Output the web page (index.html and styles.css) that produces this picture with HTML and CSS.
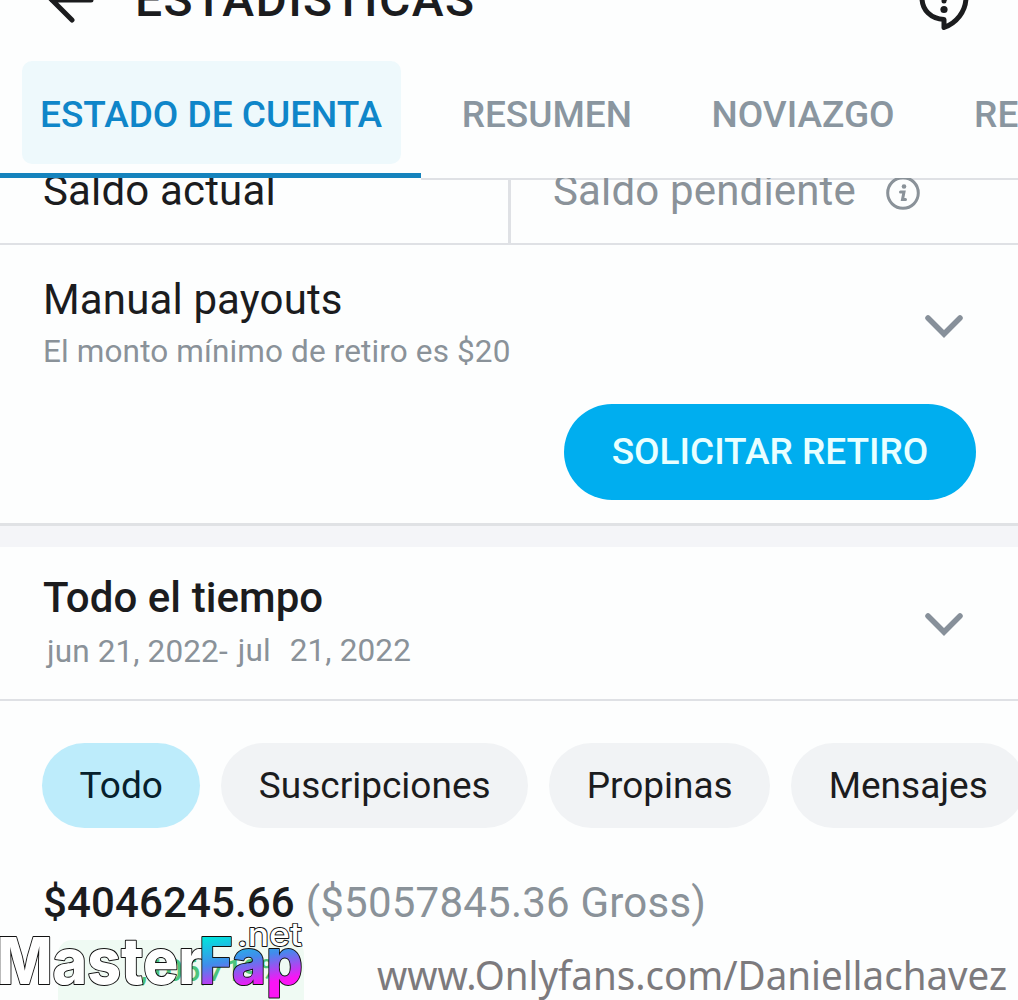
FILE: index.html
```html
<!DOCTYPE html>
<html lang="es">
<head>
<meta charset="utf-8">
<title>Estadísticas</title>
<link rel="stylesheet" href="styles.css">
</head>
<body>
<header class="topbar">
  <svg class="back" viewBox="0 0 48 48"><path d="M43 24H4M24 4L4 24l20 20"/></svg>
  <h1 class="title">ESTADÍSTICAS</h1>
  <svg class="help" viewBox="0 0 50 60"><path d="M25 49.500C12 49 3 40 3 28C3 14 12 5 25 5C38 5 47 14 47 27C47 42 37 53 25 57.500Z"/><path d="M18 21c0-9 14-9 14 0c0 6-7 6-7 10"/><circle cx="25" cy="39.500" r="3.600"/></svg>
</header>
<nav class="tabs">
  <a class="tab active">ESTADO DE CUENTA</a>
  <a class="tab">RESUMEN</a>
  <a class="tab">NOVIAZGO</a>
  <a class="tab">REFERIDOS</a>
</nav>
<section class="balances">
  <div class="balance current">Saldo actual</div>
  <div class="balance pending">Saldo pendiente
    <svg class="info" viewBox="0 0 36 36"><circle cx="18" cy="18" r="15.300"/><path d="M15.500 17h3.500l-1.500 7.500h3"/><circle class="dot" cx="19" cy="11.500" r="2.300"/></svg>
  </div>
</section>
<section class="payouts">
  <div class="row">
    <div>
      <h2 class="name">Manual payouts</h2>
      <p class="note">El monto mínimo de retiro es $20</p>
    </div>
    <svg class="chevron" viewBox="0 0 40 24"><path d="M4 4l16 16L36 4"/></svg>
  </div>
  <button class="withdraw">SOLICITAR RETIRO</button>
</section>
<section class="period">
  <div class="row">
    <div>
      <h2 class="name strong">Todo el tiempo</h2>
      <p class="note dates"><span>jun 21, 2022-</span><span class="to">jul</span><span class="end">21, 2022</span></p>
    </div>
    <svg class="chevron" viewBox="0 0 40 24"><path d="M4 4l16 16L36 4"/></svg>
  </div>
</section>
<section class="earnings">
  <div class="chips">
    <span class="chip on">Todo</span>
    <span class="chip">Suscripciones</span>
    <span class="chip">Propinas</span>
    <span class="chip">Mensajes</span>
  </div>
  <p class="amount"><b>$4046245.66</b><span>($5057845.36 Gross)</span></p>
  <div class="growth">1,106,719%</div>
</section>
<svg class="marks" viewBox="0 0 1018 90">
  <defs><linearGradient id="fade" x1="0" y1="0" x2="0.250" y2="1"><stop offset="0.200" stop-color="#00e5dc"/><stop offset="0.550" stop-color="#428bec"/><stop offset="0.900" stop-color="#fa14f5"/></linearGradient></defs>
  <text class="logo" x="-3" y="74" textLength="206" lengthAdjust="spacingAndGlyphs">Master</text>
  <text class="logo fap" x="199" y="74" textLength="104" lengthAdjust="spacingAndGlyphs">Fap</text>
  <text class="net" x="237" y="36" textLength="65" lengthAdjust="spacingAndGlyphs">.net</text>
  <text class="url" x="377" y="79.500" textLength="630" lengthAdjust="spacingAndGlyphs">www.Onlyfans.com/Daniellachavez</text>
</svg>
</body>
</html>
```
FILE: styles.css
```css
* { box-sizing: border-box; margin: 0; padding: 0; }
body { height: 1000px; overflow: hidden; position: relative; background: #fdfefe; color: #1b1c1e; font-family: Roboto, "Liberation Sans", sans-serif; }
svg { display: block; flex: none; fill: none; stroke: currentColor; stroke-linecap: round; }
.topbar { height: 122px; margin-top: -61px; display: flex; align-items: center; padding: 0 49px 0 48px; }
.back { width: 48px; height: 48px; stroke-width: 5; margin-top: -1px; }
.title { font-size: 48px; font-weight: 500; line-height: 56px; margin-left: 39px; letter-spacing: 1.350px; white-space: nowrap; }
.help { width: 50px; height: 60px; margin-left: auto; stroke-width: 5; stroke-linejoin: round; }
.help circle { fill: currentColor; stroke: none; }
.tabs { height: 117px; display: flex; align-items: flex-start; gap: 42px; padding-left: 22px; overflow: hidden; color: #8a96a0; background: linear-gradient(#1583bd, #1583bd) 0 100% / 421px 5px no-repeat; }
.tab { flex: none; height: 103px; line-height: 107px; padding: 0 19px 0 18px; font-size: 37px; font-weight: 500; border-radius: 10px; }
.tab + .tab { padding-left: 18.500px; }
.tab.active { color: #0f86c9; background: #eef9fc; }
.balances { height: 67px; display: grid; grid-template-columns: 511px 1fr; overflow: hidden; border-bottom: 2px solid #dfe1e5; background: linear-gradient(90deg, transparent 421px, #dfe1e5 421px) 0 0 / 100% 2px no-repeat; font-size: 42px; line-height: 25px; letter-spacing: 0.160px; }
.balance { display: flex; align-items: flex-start; padding-left: 43px; }
.current { border-right: 3px solid #dfe1e5; }
.pending { padding-left: 42px; color: #8a9299; }
.info { width: 36px; height: 36px; margin: -3px 0 0 29px; stroke-width: 3; }
.info .dot { fill: currentColor; stroke: none; }
.payouts { height: 281px; padding: 30px 42px 0 43px; border-bottom: 3px solid #e0e2e5; }
.row { display: flex; justify-content: space-between; }
.name { font-size: 42px; font-weight: 400; line-height: 50px; letter-spacing: 0.150px; }
.strong { font-weight: 500; letter-spacing: 0.060px; }
.note { font-size: 31.500px; line-height: 36px; margin-top: 9px; color: #8a9299; white-space: pre; letter-spacing: 0.130px; }
.chevron { width: 40px; height: 24px; margin: 39px 12px 0 0; stroke-width: 5.500; color: #87909a; }
.withdraw { display: block; width: 412px; height: 96px; margin: 34px 0 0 auto; border: 0; border-radius: 48px; background: #00aeef; color: #e9ffff; font: 500 37px/96px Roboto, sans-serif; }
.period { height: 175px; padding: 26px 42px 0 43px; border-top: 21px solid #f4f5f8; border-bottom: 2px solid #dfe1e5; }
.dates { display: flex; margin-top: 11px; padding-left: 4px; }
.to { margin: -1px 0 1px 10px; }
.end { margin: -1px 0 1px 19px; }
.earnings { padding: 42px 0 0 42px; }
.chips { display: flex; gap: 21px; }
.chip { flex: none; height: 85px; padding: 0 37.500px; border-radius: 43px; background: #f1f3f5; font-size: 37px; line-height: 86px; }
.on { background: #bdecfb; color: #06202c; }
.amount { display: flex; gap: 11px; margin: 49px 0 0 1px; font-size: 42px; line-height: 51px; letter-spacing: 0.220px; color: #8a9299; }
.amount b { font-weight: 500; color: #1b1c1e; letter-spacing: 0.120px; }
.growth { width: 246px; height: 80px; margin: 12px 0 0 16px; padding-left: 65px; border-radius: 14px; background: #effaf3; color: #4cc47c; font-size: 31px; line-height: 62px; font-weight: 500; }
.marks { position: absolute; left: 0; top: 910px; width: 1018px; height: 90px; }
.marks text { stroke-linejoin: round; paint-order: stroke; }
.logo { font: 800 64px Inter, sans-serif; fill: #fff; stroke: #111; stroke-width: 2; }
.fap { fill: url(#fade); }
.net { font: 500 32px Inter, sans-serif; fill: #fff; stroke: #111; stroke-width: 1.800; }
.url { font: 400 40px "Noto Sans", sans-serif; fill: #7c7a7d; stroke: none; }
```
